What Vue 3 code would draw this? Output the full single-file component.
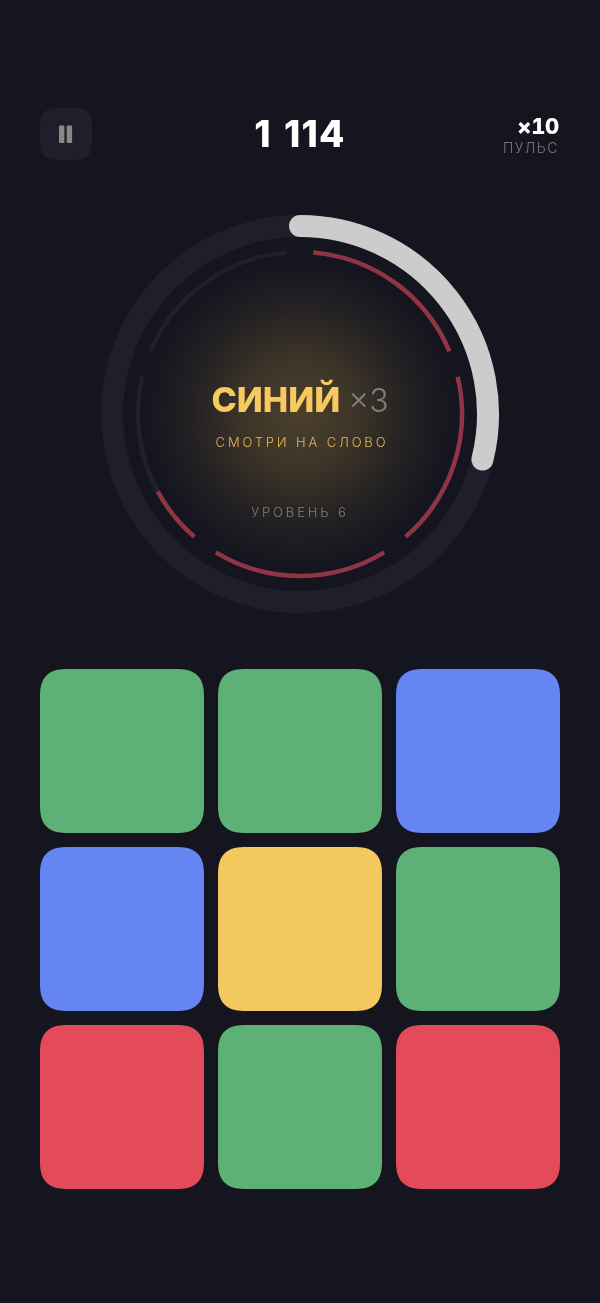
<script setup>
const CX = 200
const CY = 200

function point(r, deg) {
  const a = (deg * Math.PI) / 180
  return [CX + r * Math.sin(a), CY - r * Math.cos(a)]
}

function arc(r, from, to) {
  const [x1, y1] = point(r, from)
  const [x2, y2] = point(r, to)
  const large = to - from > 180 ? 1 : 0
  return `M${x1.toFixed(2)} ${y1.toFixed(2)}A${r} ${r} 0 ${large} 1 ${x2.toFixed(2)} ${y2.toFixed(2)}`
}

// beat marks round the dial, red = already gone
const marks = [
  { from: 4.7, to: 67.3, red: true },
  { from: 76.7, to: 139.3, red: true },
  { from: 148.7, to: 211.3, red: true },
  { from: 220.7, to: 241.5, red: true },
  { from: 241.5, to: 283.3, red: false },
  { from: 292.7, to: 355.3, red: false },
]

const tiles = ['green', 'green', 'blue', 'blue', 'yellow', 'green', 'red', 'green', 'red']
</script>

<template>
  <div class="screen">
    <header class="top">
      <button class="pause" aria-label="Пауза">
        <svg width="14" height="18" viewBox="0 0 14 18">
          <rect x="0" y="0.5" width="5.4" height="17.4" rx="1" />
          <rect x="7.7" y="0.5" width="5.4" height="17.4" rx="1" />
        </svg>
      </button>
      <div class="score">1 114</div>
      <div class="combo">
        <div class="combo-num">×10</div>
        <div class="combo-label">ПУЛЬС</div>
      </div>
    </header>

    <section class="dial">
      <div class="glow"></div>
      <svg class="rings" width="400" height="400" viewBox="0 0 400 400">
        <circle :cx="CX" :cy="CY" r="188" class="track" />
        <path
          v-for="m in marks"
          :key="m.from"
          :d="arc(162, m.from, m.to)"
          class="mark"
          :class="{ red: m.red }"
        />
        <path :d="arc(188, 0, 104)" class="progress" />
      </svg>
      <div class="center">
        <div class="word">
          <span class="word-name">СИНИЙ</span>
          <span class="word-times">×3</span>
        </div>
        <div class="hint">СМОТРИ НА СЛОВО</div>
        <div class="level">УРОВЕНЬ 6</div>
      </div>
    </section>

    <section class="grid">
      <div v-for="(t, i) in tiles" :key="i" class="tile" :class="t"></div>
    </section>
  </div>
</template>

<style scoped>
.screen {
  width: 600px;
  height: 1303px;
  box-sizing: border-box;
  padding: 108px 40px 0;
  background: #14151f;
  font-family: Inter, "Noto Sans", sans-serif;
  overflow: hidden;
}

.top {
  display: grid;
  grid-template-columns: 1fr auto 1fr;
  align-items: center;
  height: 52px;
  will-change: transform;
}

.pause {
  width: 52px;
  height: 52px;
  padding: 0;
  border: 0;
  border-radius: 18px;
  corner-shape: superellipse(1.4);
  background: #1e1f2a;
  display: flex;
  align-items: center;
  justify-content: center;
}
.pause svg { fill: #888888; }

.score {
  font-size: 37px;
  font-weight: 800;
  line-height: 52px;
  color: #fff;
  letter-spacing: 1.2px;
  word-spacing: 3px;
}

.combo {
  justify-self: end;
  text-align: right;
  margin: 2px 1px 0 0;
}
.combo-num {
  font-size: 22px;
  line-height: 26px;
  font-weight: 800;
  color: #fff;
  letter-spacing: -0.3px;
  font-variant-numeric: tabular-nums;
}
.combo-label {
  font-size: 14px;
  line-height: 18px;
  font-weight: 300;
  letter-spacing: 1.5px;
  color: #77777b;
}

.dial {
  position: relative;
  width: 400px;
  height: 400px;
  margin: 54px auto 55px;
}
.rings {
  position: absolute;
  inset: 0;
}
.glow {
  position: absolute;
  inset: 45px;
  border-radius: 50%;
  background: radial-gradient(circle closest-side, rgba(240, 190, 80, 0.25) 0%, rgba(240, 190, 80, 0.19) 35%, rgba(240, 190, 80, 0.07) 70%, rgba(240, 190, 80, 0) 100%);
}
.track {
  fill: none;
  stroke: #1e1f2b;
  stroke-width: 22;
}
.progress {
  fill: none;
  stroke: #cccccc;
  stroke-width: 22;
  stroke-linecap: round;
}
.mark {
  fill: none;
  stroke: #1f202c;
  stroke-width: 4.5;
}
.mark.red { stroke: #8f3545; }

.center {
  position: absolute;
  inset: 0;
  display: flex;
  flex-direction: column;
  align-items: center;
  padding-top: 161px;
  box-sizing: border-box;
  will-change: transform;
}
.word {
  display: flex;
  align-items: baseline;
  gap: 8px;
  height: 50px;
  line-height: 50px;
}
.word-name {
  font-size: 34px;
  font-weight: 800;
  color: #f6ca5f;
}
.word-times {
  font-size: 32px;
  font-weight: 300;
  color: #7f7f7f;
}
.hint {
  margin-top: 8px;
  padding-left: 4px;
  font-size: 13px;
  line-height: 18px;
  font-weight: 300;
  letter-spacing: 2.85px;
  color: #e2b755;
}
.level {
  margin-top: 52px;
  font-size: 13px;
  line-height: 18px;
  font-weight: 300;
  letter-spacing: 2.9px;
  color: #7e7e80;
}

.grid {
  display: grid;
  grid-template-columns: repeat(3, 164px);
  grid-auto-rows: 164px;
  gap: 14px;
}
.tile {
  border-radius: 28px;
  corner-shape: superellipse(1.4);
}
.green { background: #5db076; }
.blue { background: #6585f3; }
.yellow { background: #f3c85e; }
.red { background: #e34b5a; }
</style>
